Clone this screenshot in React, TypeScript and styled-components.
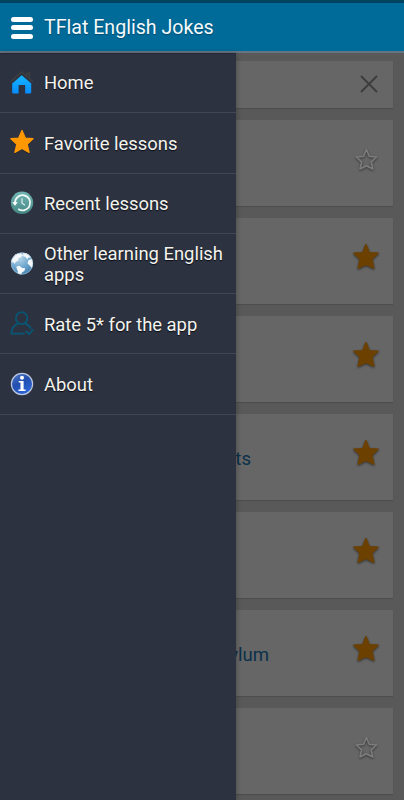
import React from 'react';
import styled, { createGlobalStyle } from 'styled-components';

const GlobalStyle = createGlobalStyle`
  * { box-sizing: border-box; }
  body { margin: 0; background: #595959; font-family: Roboto, "Liberation Sans", sans-serif; }
`;

const Screen = styled.div`
  width: 404px;
  height: 800px;
  display: flex;
  flex-direction: column;
  overflow: hidden;
  background: #595959;
`;

const StatusBar = styled.div`
  height: 3px;
  flex: none;
  background: #00435f;
`;

const Header = styled.header`
  height: 50px;
  flex: none;
  display: flex;
  align-items: center;
  gap: 11px;
  padding: 1px 0 0 11px;
  background: #006a98;
  border-bottom: 2px solid #667583;
`;

const MenuButton = styled.button`
  display: flex;
  flex-direction: column;
  gap: 3.5px;
  width: 22px;
  padding: 0;
  border: 0;
  background: none;
`;

const MenuBar = styled.span`
  height: 5px;
  border-radius: 2.5px;
  background: #fff;
`;

const Title = styled.h1`
  margin: 0;
  padding-top: 1px;
  font-size: 19.6px;
  font-weight: 400;
  line-height: 24px;
  color: #f4fafd;
  text-shadow: 0 1px 1px rgba(0, 20, 40, 0.35);
`;

const Body = styled.div`
  position: relative;
  flex: 1;
  min-height: 0;
`;

const List = styled.main`
  display: flex;
  flex-direction: column;
  gap: 12px;
  padding: 8px 11px;
`;

const Card = styled.article<{ $height: number }>`
  height: ${(p) => p.$height}px;
  flex: none;
  display: flex;
  align-items: center;
  justify-content: space-between;
  padding-right: 13px;
  background: #666;
  box-shadow: 0 1px 1px rgba(0, 0, 0, 0.12);
`;

const CardTitle = styled.span<{ $width: number }>`
  width: ${(p) => p.$width}px;
  padding-top: 3px;
  text-align: right;
  font-size: 18.6px;
  line-height: 22px;
  color: #0b3049;
`;

const StarIcon = styled.svg`
  width: 28px;
  height: 30px;
  flex: none;
  margin-top: -6px;
  overflow: visible;
  filter: drop-shadow(0 1px 1px rgba(0, 0, 0, 0.5));
`;

const CloseIcon = styled.svg`
  width: 24px;
  height: 24px;
  margin: -1px -1px 0 0;
`;

const Drawer = styled.nav`
  position: absolute;
  inset: 0 auto 0 0;
  width: 236px;
  background: #2d3240;
  box-shadow: inset 0 1px 1px #252936, 1px 0 5px rgba(0, 0, 0, 0.22);
`;

const DrawerItem = styled.a`
  height: 60.3px;
  display: flex;
  align-items: center;
  gap: 10px;
  padding: 0 6px 0 10px;
  border-bottom: 1px solid #414653;
`;

const ItemIcon = styled.svg`
  width: 24px;
  height: 24px;
  flex: none;
  overflow: visible;
`;

const ItemLabel = styled.span`
  flex: 1;
  padding-top: 1px;
  font-size: 18.4px;
  line-height: 21.4px;
  color: #f4f4ee;
  text-shadow: 0 1px 1px #090c14;
`;

const STAR =
  'M12 -.6 15.3 7.1 23 7.7 17.2 13.3 19.1 21.4 12 17.4 4.9 21.4 6.8 13.3 .9 7.7 8.7 7.1Z';

function HomeIcon() {
  return (
    <ItemIcon viewBox="0 0 24 24">
      <defs>
        <linearGradient id="home" x2="0" y2="1">
          <stop stopColor="#15b7ff" />
          <stop offset="1" stopColor="#078cff" />
        </linearGradient>
      </defs>
      <path d="M.6 10.8 11.7 .9 17 5.6V2.2h2.4v5.6l3.6 3" fill="none" stroke="#3d3e40" strokeWidth="1.7" />
      <path d="M11.7 4.2 21.2 12.5v8.8q0 1.2-1.2 1.2h-4.8v-8.4H8.6v8.4H3.4q-1.2 0-1.2-1.2v-8.8Z" fill="url(#home)" />
    </ItemIcon>
  );
}

function FavoriteIcon() {
  return (
    <ItemIcon viewBox="0 0 24 24">
      <path d={STAR} transform="translate(0 1.2)" fill="#11141c" stroke="#11141c" opacity=".5" />
      <path d={STAR} fill="#ff9800" stroke="#ff9800" strokeWidth="1.3" strokeLinejoin="round" />
    </ItemIcon>
  );
}

function RecentIcon() {
  return (
    <ItemIcon viewBox="0 0 24 24">
      <defs>
        <linearGradient id="recent" x2="0" y2="1">
          <stop stopColor="#71b5b4" />
          <stop offset="1" stopColor="#458783" />
        </linearGradient>
      </defs>
      <circle cx="12" cy="11.8" r="11.2" fill="url(#recent)" />
      <path d="M5 12a7.6 7.6 0 1 1 3.2 6" fill="none" stroke="#f1faf8" strokeWidth="1.7" />
      <path d="M2.1 11.3h5.7L5 14.8Z" fill="#fff" />
      <path d="M12 7.2v5l3 2" fill="none" stroke="#e0efed" strokeWidth="1.2" />
    </ItemIcon>
  );
}

function GlobeIcon() {
  return (
    <ItemIcon viewBox="0 0 24 24">
      <defs>
        <radialGradient id="globe" cx=".35" cy=".2" r=".9">
          <stop stopColor="#c2dded" />
          <stop offset=".55" stopColor="#6fa7cf" />
          <stop offset="1" stopColor="#3e7bab" />
        </radialGradient>
        <clipPath id="globe-clip"><circle cx="12" cy="11.5" r="11" /></clipPath>
      </defs>
      <circle cx="12" cy="11.5" r="11" fill="url(#globe)" />
      <g clipPath="url(#globe-clip)" fill="#f5f8fa">
        <path d="M1 7.5 5.2 2 11 1.5l2 2-3 2.2-2 .5.5 2.2-2.5 1.4-1.7 2.1-.8-1.6L1 10.5Z" />
        <path d="m13 1.3 4.3-.7 4.5 4.8-3.6.3-1 1.8-1.6-2.5-2.3-.8Z" />
        <path d="m18.5 7.9 3.5-1 2 5-2.3 4.2-2-2.6-2.2-2Z" />
        <path d="m6.2 14.7 3-1 3 2.2 3 .4-.8 2.8-2.3 1.2-1 2.6H8l-.3-4Z" />
      </g>
      <circle cx="12" cy="11.5" r="10.7" fill="none" stroke="#a7c5d7" strokeWidth=".6" />
    </ItemIcon>
  );
}

function RateIcon() {
  return (
    <ItemIcon viewBox="0 0 24 24" fill="none" stroke="#075774" strokeWidth="1.8" strokeLinejoin="round">
      <ellipse cx="11.6" cy="6.1" rx="5.7" ry="6" />
      <path d="M8.6 11.4C4 13 1.7 15.9 1.3 21.6H14.5M14.8 11.4c2.8 1 4.9 2.8 6.2 5.4" />
      <path d="m15.6 19 3.3 3.2 4.5-4.8" />
    </ItemIcon>
  );
}

function AboutIcon() {
  return (
    <ItemIcon viewBox="0 0 24 24">
      <defs>
        <linearGradient id="about" x2=".6" y2="1">
          <stop stopColor="#537dc6" />
          <stop offset=".5" stopColor="#234eae" />
          <stop offset="1" stopColor="#2c65d8" />
        </linearGradient>
      </defs>
      <circle cx="12" cy="12" r="10.6" fill="url(#about)" stroke="#bac7df" strokeWidth="1.2" />
      <circle cx="12" cy="5.7" r="2" fill="#fff" />
      <path d="M8.7 9h4.9v8.4h2V19H8.5v-1.6h2V10.6H8.7Z" fill="#fff" />
    </ItemIcon>
  );
}

function CardStar({ filled }: { filled: boolean }) {
  return (
    <StarIcon viewBox="0 0 28 30">
      {filled ? (
        <path
          d="M14 1.6 17.2 9.6 26.2 10.1 19.9 15.9 21.8 25.2 14 21.4 6.2 25.2 8.1 15.9 1.8 10.1 10.8 9.6Z"
          fill="#6c4100"
          stroke="#6c4100"
          strokeWidth="1.4"
          strokeLinejoin="round"
        />
      ) : (
        <path
          d="M14.4 4.5 17.2 11.3 24.6 12 19.2 16.8 20.8 24 14.4 20.7 8 24 9.6 16.8 4.2 12 11.6 11.3Z"
          fill="none"
          stroke="#7c7c7c"
          strokeWidth="1.6"
          strokeLinejoin="round"
        />
      )}
    </StarIcon>
  );
}

const menu = [
  { label: 'Home', Icon: HomeIcon },
  { label: 'Favorite lessons', Icon: FavoriteIcon },
  { label: 'Recent lessons', Icon: RecentIcon },
  { label: 'Other learning English apps', Icon: GlobeIcon },
  { label: 'Rate 5* for the app', Icon: RateIcon },
  { label: 'About', Icon: AboutIcon },
];

const lessons = [
  { title: '', width: 0, favorite: false },
  { title: '', width: 0, favorite: true },
  { title: '', width: 0, favorite: true },
  { title: 'ts', width: 240, favorite: true },
  { title: '', width: 0, favorite: true },
  { title: 'ylum', width: 258, favorite: true },
  { title: '', width: 0, favorite: false },
];

export default function App() {
  return (
    <>
      <GlobalStyle />
      <Screen>
        <StatusBar />
        <Header>
          <MenuButton aria-label="Menu">
            <MenuBar />
            <MenuBar />
            <MenuBar />
          </MenuButton>
          <Title>TFlat English Jokes</Title>
        </Header>
        <Body>
          <List>
            <Card $height={47}>
              <span />
              <CloseIcon viewBox="0 0 24 24">
                <path d="m4 4 16 16M20 4 4 20" stroke="#3c3c3c" strokeWidth="1.8" />
              </CloseIcon>
            </Card>
            {lessons.map((lesson, i) => (
              <Card key={i} $height={86}>
                <CardTitle $width={lesson.width}>{lesson.title}</CardTitle>
                <CardStar filled={lesson.favorite} />
              </Card>
            ))}
          </List>
          <Drawer>
            {menu.map(({ label, Icon }) => (
              <DrawerItem key={label}>
                <Icon />
                <ItemLabel>{label}</ItemLabel>
              </DrawerItem>
            ))}
          </Drawer>
        </Body>
      </Screen>
    </>
  );
}
